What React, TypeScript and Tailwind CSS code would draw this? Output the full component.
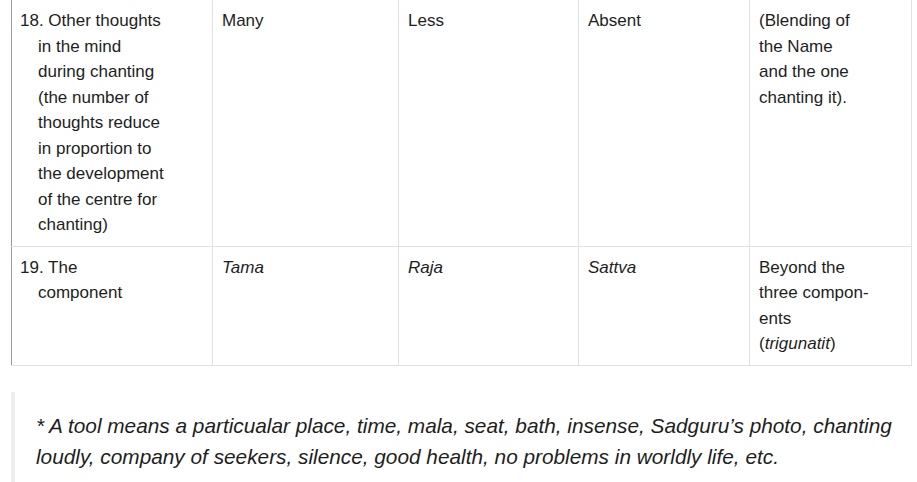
const cell = "border border-[#e1e1e1] align-top pl-[9px] pr-[42px] pt-[8px] pb-[8px]"
const first = "border border-[#e1e1e1] border-l-[#9a9a9a] align-top pl-[8px] pr-[44px] pt-[8px] pb-[8px]"
const last = "border border-[#e1e1e1] align-top pl-[9px] pr-[8px] pt-[8px] pb-[8px] whitespace-nowrap"

export default function App() {
  return (
    <div className="w-[917px] h-[482px] overflow-hidden bg-white font-['Liberation_Sans',Arial,sans-serif] text-[#1e1e1e]">
      <div className="ml-[11px] w-[900px] mt-[-1px]">
        <table className="w-full table-fixed border-collapse text-[17px] leading-[25.5px] border-l border-l-[#9a9a9a]">
          <colgroup>
            <col className="w-[201px]" />
            <col className="w-[186px]" />
            <col className="w-[180px]" />
            <col className="w-[171px]" />
            <col className="w-[162px]" />
          </colgroup>
          <tbody>
            <tr>
              <td className={first}>
                <div className="pl-[18px] indent-[-18px]">
                  18. Other thoughts in the mind during chanting (the number of thoughts reduce in proportion to the development of the centre for chanting)
                </div>
              </td>
              <td className={cell}>Many</td>
              <td className={cell}>Less</td>
              <td className={cell}>Absent</td>
              <td className={last}>
                (Blending of<br />the Name<br />and the one<br />chanting it).
              </td>
            </tr>
            <tr>
              <td className={first}>
                <div className="pl-[18px] indent-[-18px]">19. The<br />component</div>
              </td>
              <td className={cell}><em>Tama</em></td>
              <td className={cell}><em>Raja</em></td>
              <td className={cell}><em>Sattva</em></td>
              <td className={last}>
                Beyond the<br />three compon-<br />ents<br />(<em>trigunatit</em>)
              </td>
            </tr>
          </tbody>
        </table>

        <blockquote className="mt-[26px] border-l-4 border-[#eeeeee] pl-[21px] pt-[18px] pb-[30px]">
          <p className="italic text-[20.8px] leading-[31px]">
            * A tool means a particualar place, time, mala, seat, bath, insense, Sadguru’s photo, chanting loudly, company of seekers, silence, good health, no problems in worldly life, etc.
          </p>
        </blockquote>
      </div>
    </div>
  )
}
